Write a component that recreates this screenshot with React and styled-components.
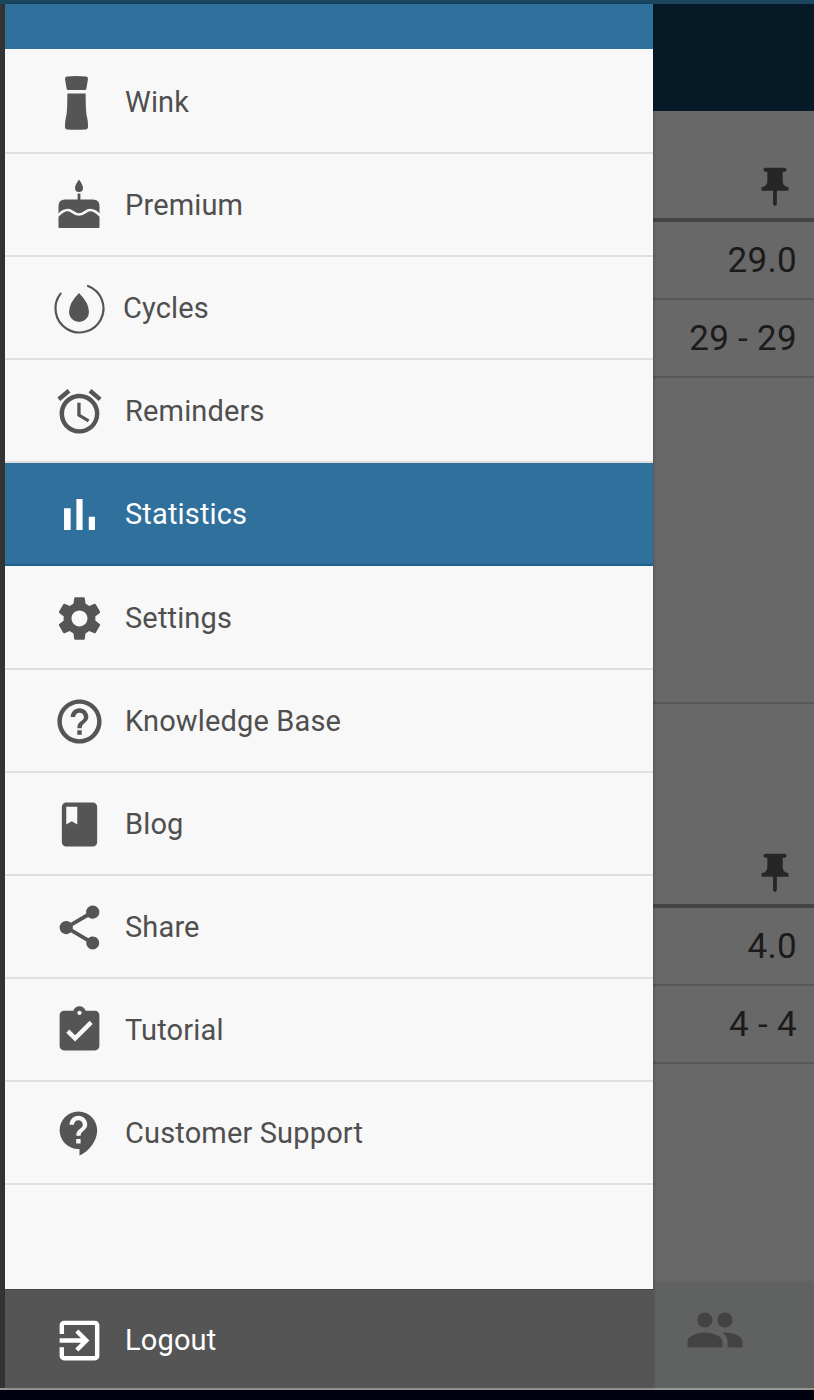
import React from 'react';
import styled, { createGlobalStyle } from 'styled-components';
import {
  MdAlarm, MdSettings, MdHelpOutline, MdBook, MdShare,
  MdAssignmentTurnedIn, MdContactSupport, MdExitToApp, MdPeople, MdPushPin,
} from 'react-icons/md';

const Global = createGlobalStyle`
  html, body { margin: 0; padding: 0; background: #000; }
  body { font-family: Roboto, "Liberation Sans", sans-serif; }
`;

const Page = styled.div`
  width: 814px; height: 1400px; display: flex; flex-direction: column;
  overflow: hidden; background: #01020f;
`;
const StatusStrip = styled.div`height: 4px; flex: none; background: #1a4660;`;
const Body = styled.div`height: 1386px; flex: none; display: flex; align-items: flex-start; background: #999;`;
const LeftEdge = styled.div`width: 5px; flex: none; height: 1384px; background: #333;`;
const Drawer = styled.nav`
  width: 648px; height: 1384px; flex: none; display: flex; flex-direction: column;
  background: #f8f8f8; position: relative; z-index: 1; box-shadow: 1px 0 3px rgba(0,0,0,.18);
`;
const DrawerHeader = styled.div`height: 45px; flex: none; background: #2f709c;`;
const Menu = styled.ul`list-style: none; margin: 0; padding: 2px 0 0; flex: 1;`;
const Item = styled.li`
  height: 103.1px; box-sizing: border-box; display: flex; align-items: center;
  padding: 2px 0 0 48px;
  border-bottom: 2px solid ${p => (p.$active ? '#1f5f8a' : '#dfdfdf')};
  background: ${p => (p.$active ? '#2f709c' : 'transparent')};
  color: ${p => (p.$active ? '#fff' : '#4f4f4f')};
`;
const IconSlot = styled.span`
  width: 53px; height: 53px; flex: none; display: flex; align-items: center; justify-content: center;
  margin-right: ${p => p.$gap ?? 19}px;
  color: ${p => p.$color || '#555'};
`;
const Label = styled.span`
  font-size: 29px; line-height: 34px; letter-spacing: .15px; white-space: nowrap; margin-top: -1px;
`;
const Footer = styled.div`
  height: 99px; flex: none; display: flex; align-items: center; padding: 3px 0 0 48px;
  box-sizing: border-box; color: #fff; background: #555; border-top: 1px solid #444;
`;

const Backdrop = styled.div`
  flex: 1; height: 1384px; display: flex; flex-direction: column; background: #686868;
`;
const AppBar = styled.div`height: 107px; flex: none; background: #051a26;`;
const Section = styled.section`flex: none; height: ${p => p.$h}px; display: flex; flex-direction: column;`;
const SectionHead = styled.div`
  height: ${p => p.$h}px; flex: none; box-sizing: border-box; display: flex; align-items: flex-end;
  justify-content: flex-end; padding-right: 16px; padding-bottom: 8px;
  color: #262626; border-bottom: 4px solid #454545;
`;
const Row = styled.div`
  height: 78px; flex: none; box-sizing: border-box; display: flex; align-items: center;
  justify-content: flex-end; padding-right: 17px; font-size: 35px; color: #1b1b1b;
  letter-spacing: .3px; border-bottom: 2px solid #575757;
`;
const Spacer = styled.div`flex: 1; border-bottom: ${p => (p.$line ? '2px solid #575757' : 'none')};`;
const BottomNav = styled.div`
  height: 106px; flex: none; box-sizing: border-box; display: flex; align-items: flex-start;
  padding: 18px 0 0 32px;
  background: #606262; color: #434343; box-shadow: 0 -1px 3px rgba(0,0,0,.08);
`;

const Shaker = () => (
  <svg width="53" height="53" viewBox="0 0 53 53" fill="currentColor" style={{ overflow: 'visible' }}>
    <path d="M14 0.6 Q23.5 -0.6 33 0.6 Q35.3 1 35 3 L33.4 12.5 Q33.2 14 31.8 14 L15.2 14 Q13.8 14 13.6 12.5 L12 3 Q11.7 1 14 0.6Z" />
    <path d="M14.4 17.5 L32.6 17.5 L32.8 30 Q33 38 34.6 44 Q35.2 49 35 51.5 Q34.8 53.3 33 53.4 Q23.5 54 14 53.4 Q12.2 53.3 12 51.5 Q11.8 49 12.4 44 Q14 38 14.2 30Z" />
  </svg>
);

const Cake = () => (
  <svg width="53" height="53" viewBox="0 0 53 53" fill="currentColor">
    <path d="M26 0.5 Q30 6 30 9 Q30 13 26 13 Q22 13 22 9 Q22 6 26 0.5Z" />
    <rect x="24.6" y="14.5" width="2.8" height="6.5" />
    <path d="M12 20.5 H40 Q46.5 20.5 46.5 27 V48 Q46.5 49 45.5 49 H6.5 Q5.5 49 5.5 48 V27 Q5.5 20.5 12 20.5Z" />
    <path d="M4.5 37 C8 33 11 31 15 31 S21 35.5 26 35.5 S33 31 37 31 S44 33 47.5 37" fill="none" stroke="#f8f8f8" strokeWidth="2.6" />
  </svg>
);

const CycleDrop = () => (
  <svg width="53" height="53" viewBox="0 0 53 53" fill="none" stroke="currentColor" strokeLinecap="round" style={{ overflow: 'visible' }}>
    <path d="M7.6 11.6 A24 24 0 1 0 35 4" strokeWidth="2.2" />
    <path d="M26 11 Q36 21 36 30 A10 10 0 0 1 16 30 Q16 21 26 11Z" fill="currentColor" stroke="none" />
  </svg>
);

const Bars = () => (
  <svg width="53" height="53" viewBox="0 0 24 24" fill="currentColor">
    <path d="M5 9.2h3V19H5zM10.6 5h2.8v14h-2.8zm5.6 8H19v6h-2.8z" />
  </svg>
);

const items = [
  { label: 'Wink', icon: <Shaker /> },
  { label: 'Premium', icon: <Cake /> },
  { label: 'Cycles', icon: <CycleDrop />, gap: 17 },
  { label: 'Reminders', icon: <MdAlarm size={53} /> },
  { label: 'Statistics', icon: <Bars />, active: true },
  { label: 'Settings', icon: <MdSettings size={53} /> },
  { label: 'Knowledge Base', icon: <MdHelpOutline size={53} /> },
  { label: 'Blog', icon: <MdBook size={53} /> },
  { label: 'Share', icon: <MdShare size={53} /> },
  { label: 'Tutorial', icon: <MdAssignmentTurnedIn size={53} /> },
  { label: 'Customer Support', icon: <MdContactSupport size={53} /> },
];

export default function App() {
  return (
    <Page>
      <Global />
      <StatusStrip />
      <Body>
        <LeftEdge />
        <Drawer>
          <DrawerHeader />
          <Menu>
            {items.map(it => (
              <Item key={it.label} $active={it.active}>
                <IconSlot $gap={it.gap} $color={it.active ? '#fff' : undefined}>{it.icon}</IconSlot>
                <Label>{it.label}</Label>
              </Item>
            ))}
          </Menu>
          <Footer>
            <IconSlot $color="#fff"><MdExitToApp size={53} /></IconSlot>
            <Label>Logout</Label>
          </Footer>
        </Drawer>
        <Backdrop>
          <AppBar />
          <Section $h={267}>
            <SectionHead $h={111}><MdPushPin size={46} /></SectionHead>
            <Row>29.0</Row>
            <Row>29 - 29</Row>
          </Section>
          <Section $h={326}><Spacer $line /></Section>
          <Section $h={360}>
            <SectionHead $h={204}><MdPushPin size={46} /></SectionHead>
            <Row>4.0</Row>
            <Row>4 - 4</Row>
          </Section>
          <Spacer />
          <BottomNav><MdPeople size={60} /></BottomNav>
        </Backdrop>
      </Body>
    </Page>
  );
}
